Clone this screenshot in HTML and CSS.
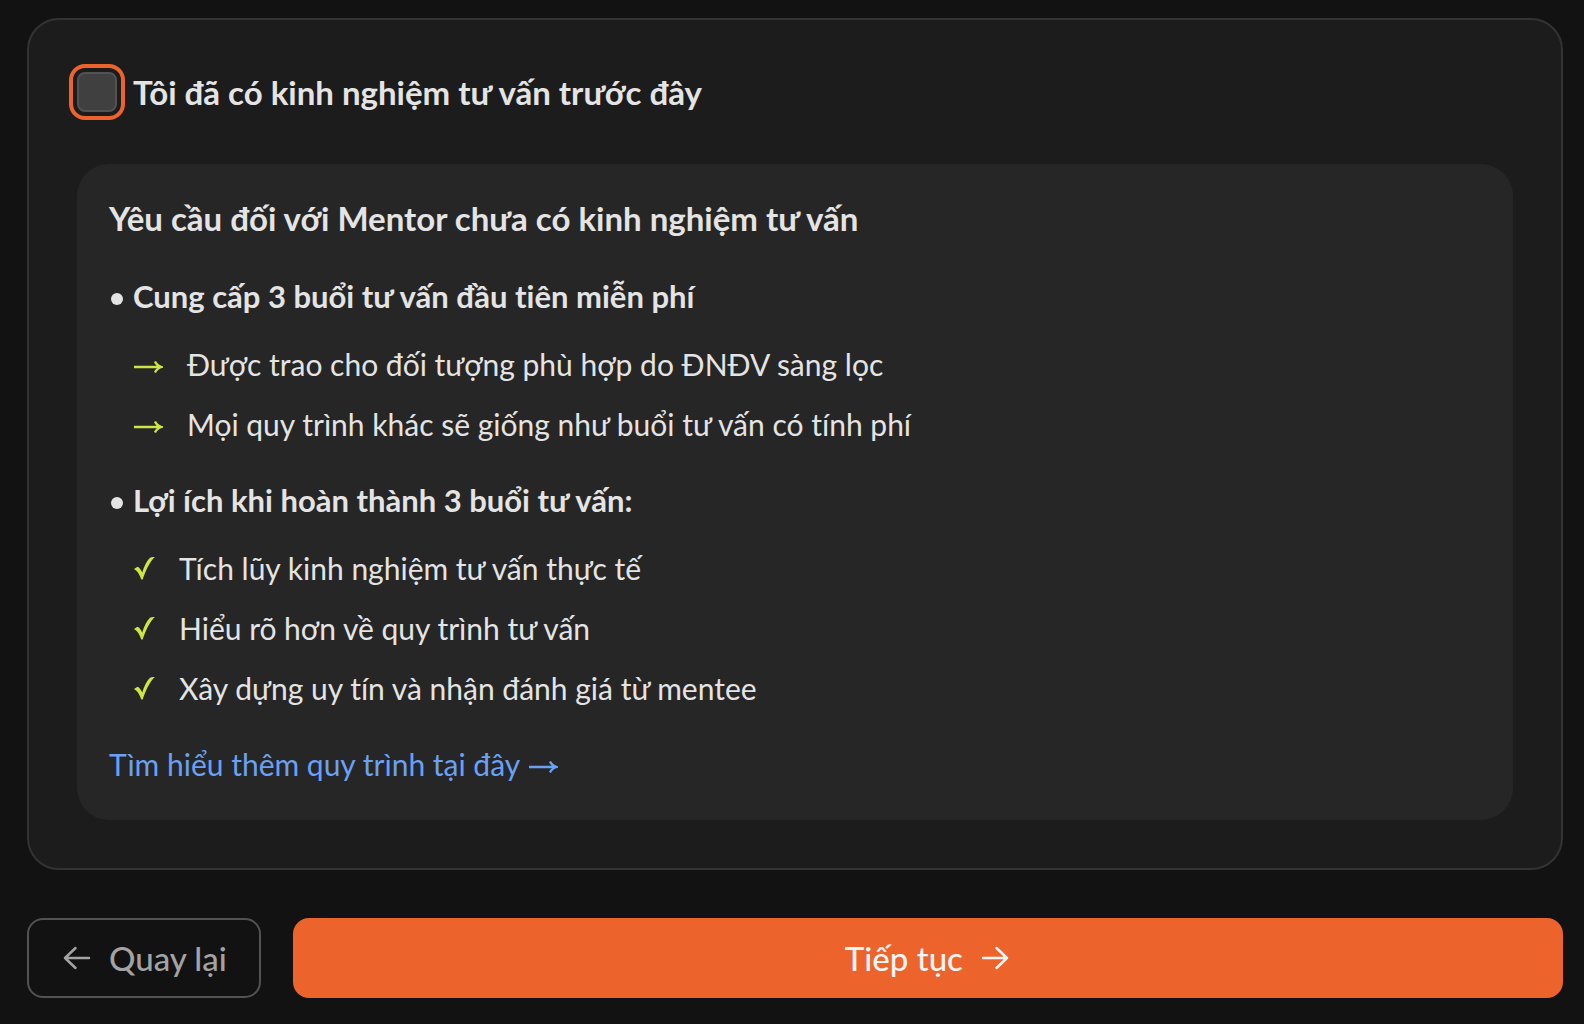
FILE: index.html
```html
<!DOCTYPE html>
<html lang="vi">
<head>
<meta charset="utf-8">
<meta name="viewport" content="width=device-width, initial-scale=1">
<title>Kinh nghiệm tư vấn</title>
<link rel="stylesheet" href="styles.css">
</head>
<body>
<svg class="sprite" aria-hidden="true">
  <symbol id="arrow-thin" viewBox="0 0 30 44"><path d="M1 25H28M22 19.500c1.200 2.800 3.500 4.500 6.500 5.500-3 1-5.300 2.700-6.500 5.500" fill="none" stroke="currentColor" stroke-width="2.300"/></symbol>
  <symbol id="check" viewBox="0 0 22 44"><path d="M1 23 4.500 20.800C6.500 21.500 8 24 9.200 26.500 11.500 19.500 14 14.500 17 11.800c1.500-1 3-1 4.800-.8C16 17 12.500 25 9.700 33.500H8.300C6.500 28.500 4.500 24.800 1 23Z" fill="currentColor"/></symbol>
  <symbol id="arrow" viewBox="0 0 32 32"><path d="M4 16H28M17.500 6 28 16 17.500 26" fill="none" stroke="currentColor" stroke-width="2.500" stroke-linecap="round" stroke-linejoin="round"/></symbol>
</svg>
<main class="page">
  <section class="card">
    <div class="toggle">
      <input class="toggle-box" type="checkbox" id="experience">
      <label class="heading" for="experience">Tôi đã có kinh nghiệm tư vấn trước đây</label>
    </div>
    <div class="info">
      <h2 class="heading">Yêu cầu đối với Mentor chưa có kinh nghiệm tư vấn</h2>
      <div class="group">
        <h3 class="point">Cung cấp 3 buổi tư vấn đầu tiên miễn phí</h3>
        <ul class="list">
          <li class="item"><svg class="mark-arrow" aria-hidden="true"><use href="#arrow-thin"/></svg>Được trao cho đối tượng phù hợp do ĐNĐV sàng lọc</li>
          <li class="item"><svg class="mark-arrow" aria-hidden="true"><use href="#arrow-thin"/></svg>Mọi quy trình khác sẽ giống như buổi tư vấn có tính phí</li>
        </ul>
      </div>
      <div class="group">
        <h3 class="point">Lợi ích khi hoàn thành 3 buổi tư vấn:</h3>
        <ul class="list">
          <li class="item"><svg class="mark-check" aria-hidden="true"><use href="#check"/></svg>Tích lũy kinh nghiệm tư vấn thực tế</li>
          <li class="item"><svg class="mark-check" aria-hidden="true"><use href="#check"/></svg>Hiểu rõ hơn về quy trình tư vấn</li>
          <li class="item"><svg class="mark-check" aria-hidden="true"><use href="#check"/></svg>Xây dựng uy tín và nhận đánh giá từ mentee</li>
        </ul>
      </div>
      <a class="more" href="#">Tìm hiểu thêm quy trình tại đây<svg class="mark-arrow" aria-hidden="true"><use href="#arrow-thin"/></svg></a>
    </div>
  </section>
  <div class="actions">
    <button class="btn btn-back" type="button"><svg class="icon icon-left" aria-hidden="true"><use href="#arrow"/></svg>Quay lại</button>
    <button class="btn btn-next" type="button">Tiếp tục<svg class="icon" aria-hidden="true"><use href="#arrow"/></svg></button>
  </div>
</main>
</body>
</html>
```
FILE: styles.css
```css
* { box-sizing: border-box; }

body {
  margin: 0;
  background: #121212;
  color: #e4e4e4;
  font-family: Lato, "Noto Sans", sans-serif;
  font-size: 30px;
  line-height: 44px;
  font-variant-ligatures: none;
}

h2, h3, ul { margin: 0; padding: 0; }

.sprite { display: none; }

.page {
  display: flex;
  flex-direction: column;
  gap: 48px;
  padding: 18px 21px 26px 27px;
}

.card {
  display: flex;
  flex-direction: column;
  gap: 48px;
  padding: 48px;
  background: #1c1c1c;
  border: 2px solid #333;
  border-radius: 32px;
}

.toggle {
  display: flex;
  align-items: center;
  gap: 16px;
}

.toggle-box {
  appearance: none;
  flex: none;
  width: 40px;
  height: 40px;
  margin: 0;
  background: #404040;
  border: 2px solid #525252;
  border-radius: 8px;
  outline: 4px solid #ec642b;
  outline-offset: 4px;
}

.toggle-box:checked { background: #ec642b; }

.heading {
  font-size: 33px;
  line-height: 48px;
  font-weight: 700;
}

.info {
  display: flex;
  flex-direction: column;
  gap: 32px;
  padding: 30px 32px 34px;
  background: #262626;
  border-radius: 32px;
}

.group {
  display: flex;
  flex-direction: column;
  gap: 24px;
}

.point {
  display: flex;
  align-items: center;
  gap: 10px;
  padding-left: 2px;
  font-size: 31px;
  font-weight: 700;
}

.point::before {
  content: "";
  width: 12px;
  height: 12px;
  margin-top: 6px;
  border-radius: 50%;
  background: currentColor;
}

.list {
  display: flex;
  flex-direction: column;
  gap: 16px;
  padding-left: 24px;
  list-style: none;
}

.item {
  display: flex;
  gap: 24px;
}

.item svg { color: #cbe745; }

.mark-arrow {
  flex: none;
  width: 30px;
  height: 44px;
}

.mark-check {
  flex: none;
  width: 22px;
  height: 44px;
}

.more {
  display: flex;
  align-self: flex-start;
  gap: 8px;
  color: #6ba1f4;
  text-decoration: none;
}

.actions {
  display: flex;
  gap: 32px;
}

.btn {
  display: flex;
  align-items: center;
  justify-content: center;
  gap: 16px;
  height: 80px;
  padding: 0 32px;
  border: 0;
  border-radius: 16px;
  font-family: inherit;
  font-size: 33px;
  line-height: 48px;
  font-weight: 500;
}

.btn-back {
  background: transparent;
  border: 2px solid #525252;
  color: #a3a3a3;
}

.btn-next {
  flex: 1;
  background: #ec642b;
  color: #f5f5f5;
}

.icon {
  width: 32px;
  height: 32px;
}

.icon-left { transform: rotate(180deg); }
```
